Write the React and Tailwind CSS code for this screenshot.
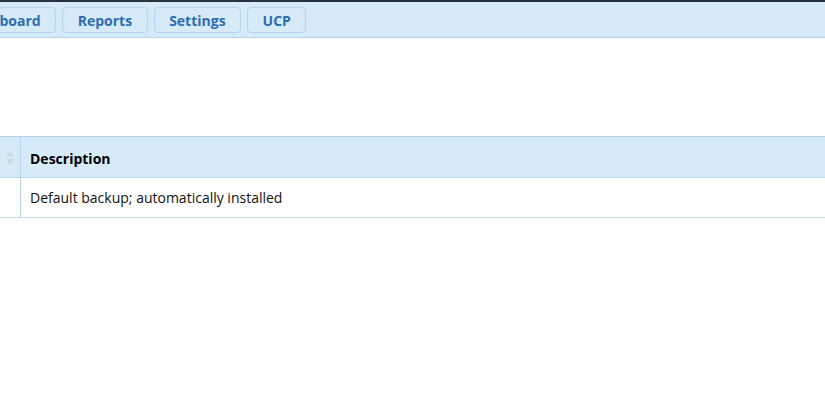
export default function App() {
  const tabs = ['Dashboard', 'Reports', 'Settings', 'UCP'];

  return (
    <div className="min-h-screen w-[825px] overflow-hidden bg-white" style={{ fontFamily: '"Open Sans", "Noto Sans", sans-serif' }}>
      <div className="h-[2px] bg-[#2c323d]" />
      <nav className="h-[36px] bg-[#d7eaf8] border-b border-[#b5d5ee] flex items-center">
        <div className="flex gap-[6px] ml-[-51px] mt-[1px]">
          {tabs.map(t => (
            <a
              key={t}
              className="h-[26px] px-[14.5px] flex items-center rounded-[4px] border border-[#b5d5ee] bg-[#d7eaf8] text-[14px] font-bold text-[#2d6db0]"
            >
              {t}
            </a>
          ))}
        </div>
      </nav>

      <div className="mt-[98px] border-t border-[#b5d5ee]">
        <div className="flex h-[41px] bg-[#d7eaf8] border-b border-[#b5d5ee]">
          <div className="w-[21px] border-r border-[#b5d5ee] flex items-center justify-end pr-[6px] pt-[2px]">
            <svg width="8" height="14" viewBox="0 0 8 14">
              <path d="M4 0 L8 6 L0 6 Z" fill="#cfd8df" />
              <path d="M4 14 L8 8 L0 8 Z" fill="#cfd8df" />
            </svg>
          </div>
          <div className="flex items-center pl-[9px] pt-[2px] text-[14px] font-bold text-black">Description</div>
        </div>
        <div className="flex h-[40px] border-b border-[#c3d9ea]">
          <div className="w-[21px] border-r border-[#b5d5ee]" />
          <div className="flex items-center pl-[9px] text-[14px] text-[#111]">Default backup; automatically installed</div>
        </div>
      </div>
    </div>
  );
}
